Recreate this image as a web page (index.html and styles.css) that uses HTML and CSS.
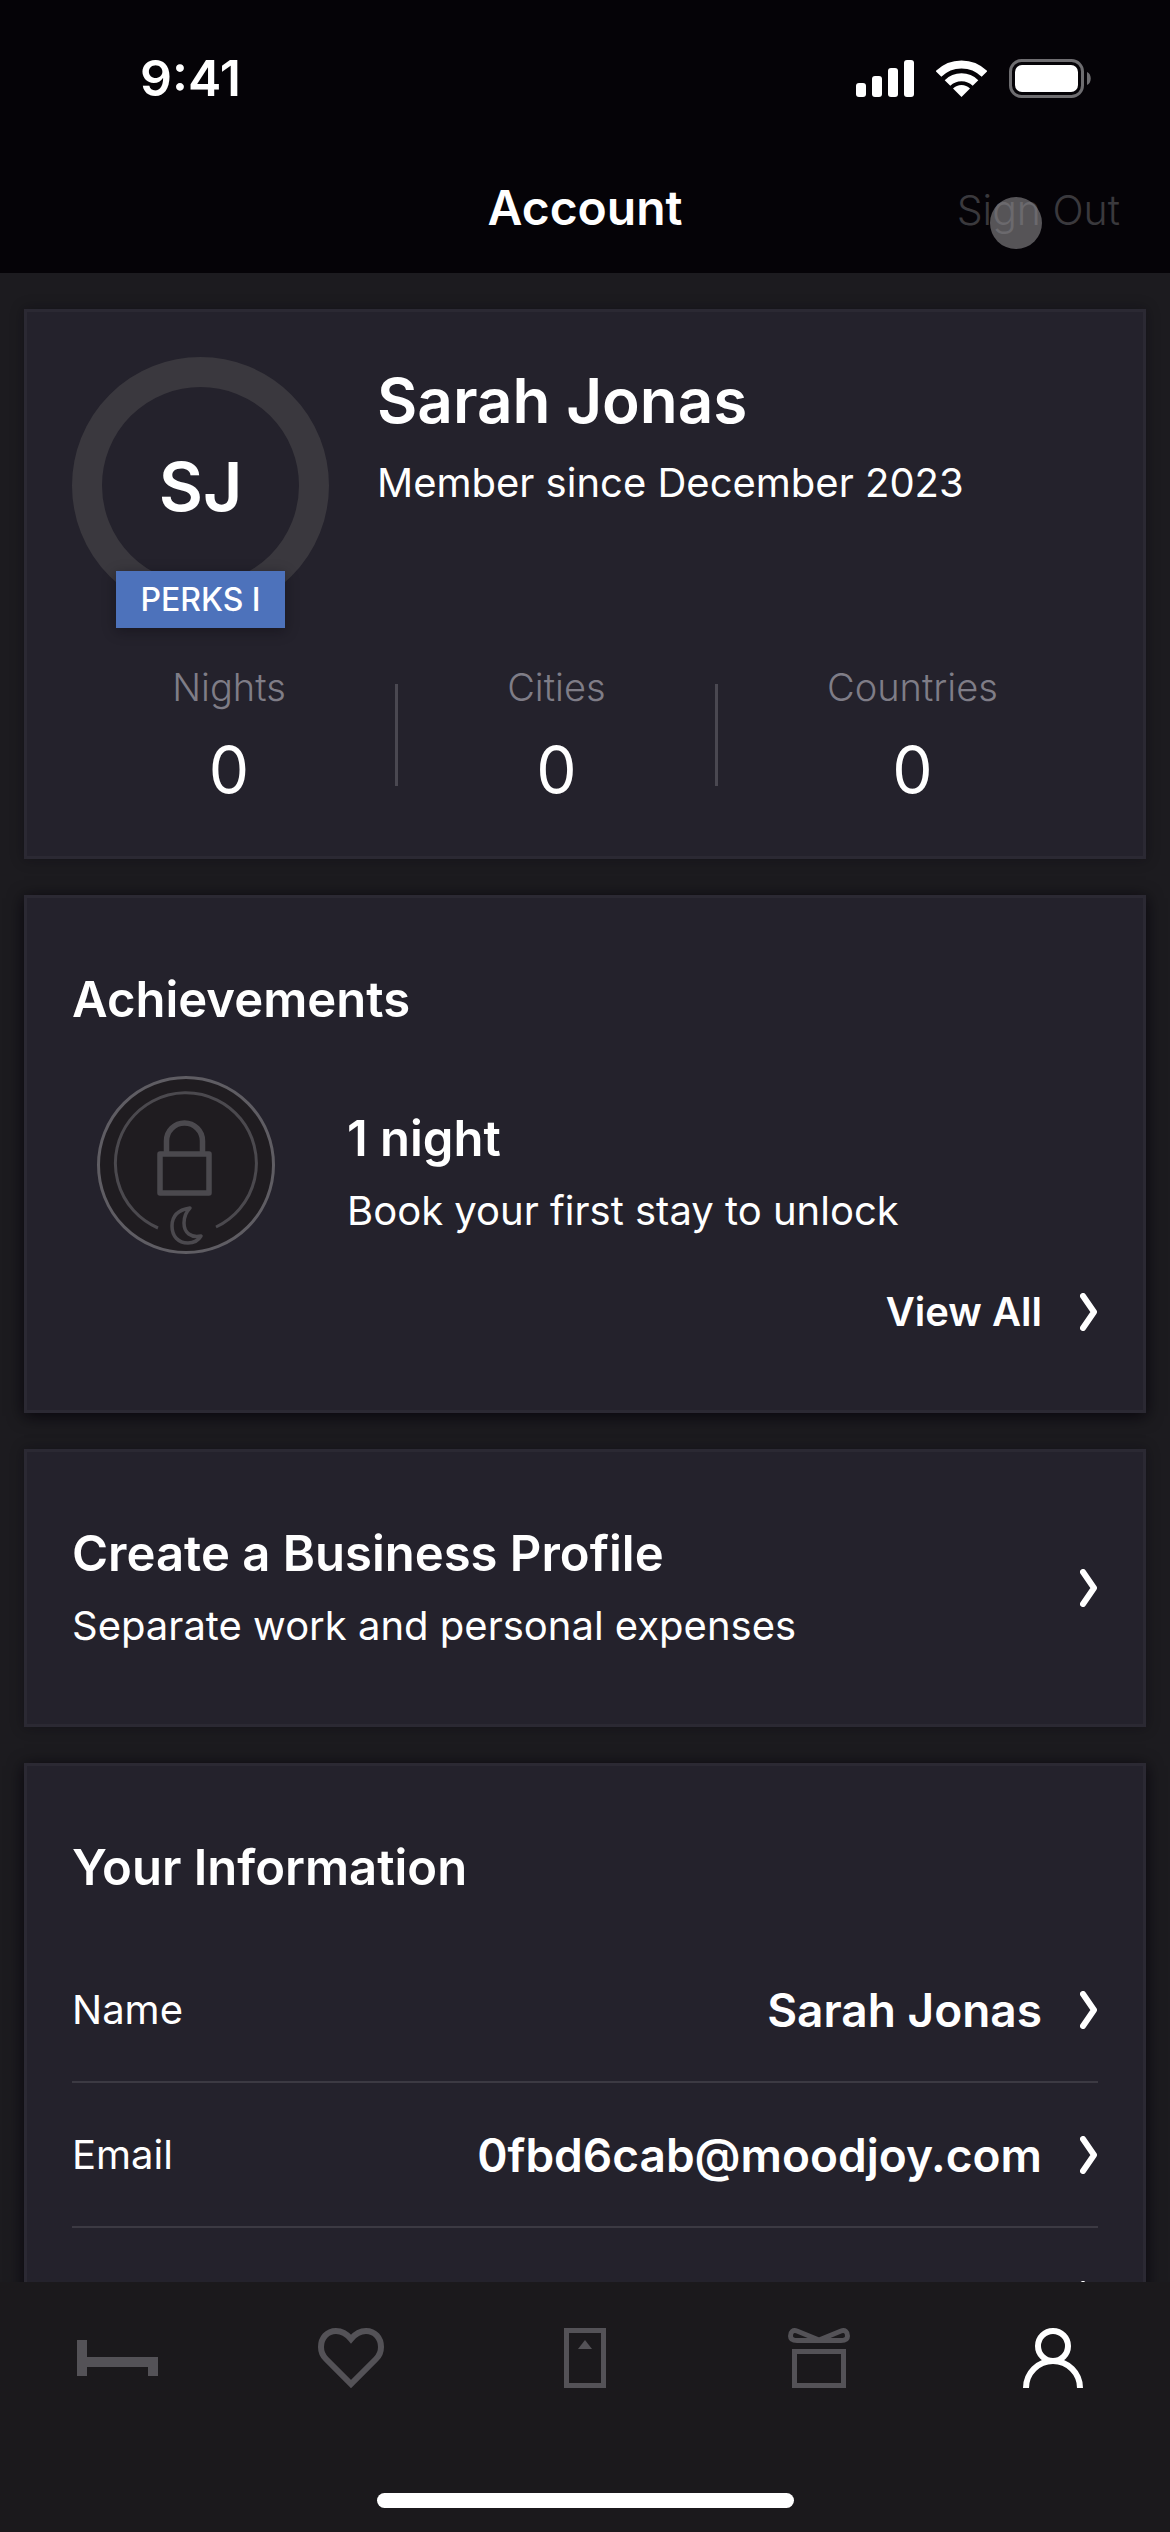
FILE: index.html
```html
<!DOCTYPE html>
<html lang="en">
<head>
  <meta charset="UTF-8" />
  <meta name="viewport" content="width=device-width, initial-scale=1.0" />
  <title>Account</title>
  <link rel="stylesheet" href="styles.css">
</head>
<body>
  <header class="top">
    <div class="status">
      <span class="time">9:41</span>
      <div class="status-icons">
        <svg width="58" height="37" viewBox="0 0 58 37" fill="#fff">
          <rect x="0" y="23" width="10" height="14" rx="3" />
          <rect x="16" y="16" width="10" height="21" rx="3" />
          <rect x="32" y="8" width="10" height="29" rx="3" />
          <rect x="48" y="0" width="10" height="37" rx="3" />
        </svg>
        <svg width="51" height="37" viewBox="0 0 51 37">
          <g fill="none" stroke="#fff" stroke-width="8">
            <path d="M2.5 14A32.5 32.5 0 0 1 48.5 14" />
            <path d="M11.5 23A20 20 0 0 1 39.5 23" />
          </g>
          <path fill="#fff" d="M25.5 37L17 28.5A12 12 0 0 1 34 28.5Z" />
        </svg>
        <svg width="83" height="39" viewBox="0 0 83 39">
          <rect x="1.5" y="1.5" width="72" height="36" rx="11" fill="none" stroke="#6e6d70" stroke-width="3" />
          <rect x="6" y="6" width="63" height="27" rx="7" fill="#fff" />
          <path d="M78 13C83 15 83 24 78 26Z" fill="#6e6d70" />
        </svg>
      </div>
    </div>
    <div class="nav">
      <h1>Account</h1>
      <button class="sign-out">Sign Out<span class="touch"></span></button>
    </div>
  </header>

  <main class="content">
    <section class="card profile">
      <div class="profile-head">
        <div class="avatar">SJ<span class="perks">PERKS I</span></div>
        <div class="profile-text">
          <h2 class="profile-name">Sarah Jonas</h2>
          <p class="text">Member since December 2023</p>
        </div>
      </div>
      <dl class="stats">
        <div class="stat"><dt>Nights</dt><dd>0</dd></div>
        <div class="stat"><dt>Cities</dt><dd>0</dd></div>
        <div class="stat"><dt>Countries</dt><dd>0</dd></div>
      </dl>
    </section>

    <section class="card raised">
      <h2 class="title">Achievements</h2>
      <div class="achievement">
        <svg width="178" height="178" viewBox="0 0 178 178" fill="none">
          <circle cx="89" cy="89" r="87.5" fill="#1f1c20" stroke="#5f5d63" stroke-width="3" />
          <path d="M61 152A70.5 70.5 0 1 1 119 151" stroke="#4b494e" stroke-width="3" />
          <g stroke="#4b494e" stroke-width="5.5" stroke-linejoin="round">
            <path d="M69.5 78V65A18 18 0 0 1 105.5 65V78" />
            <rect x="63" y="78" width="49" height="39" />
          </g>
          <path d="M93 132C80 134 75 141 75 150C75 160 81 167 91 167C97 167 101 165 104 160C94 162 87 157 87 147C87 140 89 136 93 132Z" stroke="#4b494e" stroke-width="3.5" stroke-linejoin="round" />
        </svg>
        <div class="stack">
          <h3 class="title">1 night</h3>
          <p class="text">Book your first stay to unlock</p>
        </div>
      </div>
      <a href="#" class="view-all">View All
        <svg class="chevron" viewBox="0 0 18 38"><path d="M3 3L14 19L3 35" /></svg>
      </a>
    </section>

    <a href="#" class="card business">
      <div class="stack">
        <h2 class="title">Create a Business Profile</h2>
        <p class="text">Separate work and personal expenses</p>
      </div>
      <svg class="chevron" viewBox="0 0 18 38"><path d="M3 3L14 19L3 35" /></svg>
    </a>

    <section class="card raised">
      <h2 class="title">Your Information</h2>
      <div class="rows">
        <button class="row">
          <span class="text">Name</span>
          <span class="value">Sarah Jonas</span>
          <svg class="chevron" viewBox="0 0 18 38"><path d="M3 3L14 19L3 35" /></svg>
        </button>
        <button class="row">
          <span class="text">Email</span>
          <span class="value">0fbd6cab@moodjoy.com</span>
          <svg class="chevron" viewBox="0 0 18 38"><path d="M3 3L14 19L3 35" /></svg>
        </button>
        <button class="row" aria-label="Phone">
          <span class="value"></span>
          <svg class="chevron" viewBox="0 0 18 38"><path d="M3 3L14 19L3 35" /></svg>
        </button>
      </div>
    </section>
  </main>

  <footer class="bottom">
    <nav class="tabs">
      <a href="#" class="tab" aria-label="Hotels">
        <svg width="81" height="60" viewBox="0 0 81 60" fill="currentColor">
          <path d="M0 12H10V29H81V48H71V39H10V48H0Z" />
        </svg>
      </a>
      <a href="#" class="tab" aria-label="Favorites">
        <svg width="66" height="60" viewBox="0 0 66 60" fill="none" stroke="currentColor" stroke-width="6">
          <path d="M33 11C28 5 24 3 18 3C9 3 3 10 3 19C3 24 5 28 8 31L33 56L58 31C61 28 63 24 63 19C63 10 57 3 48 3C42 3 38 5 33 11Z" />
        </svg>
      </a>
      <a href="#" class="tab" aria-label="Bookings">
        <svg width="42" height="60" viewBox="0 0 42 60">
          <rect x="2.5" y="2.5" width="37" height="55" fill="none" stroke="currentColor" stroke-width="5" />
          <path d="M14 21L21 12L28 21Z" fill="currentColor" />
        </svg>
      </a>
      <a href="#" class="tab" aria-label="Rewards">
        <svg width="62" height="60" viewBox="0 0 62 60" fill="none" stroke="currentColor" stroke-width="5">
          <path d="M31 12L9 3C5 1.5 2.5 4 2.5 8C2.5 11 5 12.5 9 12.5H53C57 12.5 59.5 11 59.5 8C59.5 4 57 1.5 53 3Z" />
          <rect x="6.5" y="23.5" width="49" height="34" />
        </svg>
      </a>
      <a href="#" class="tab active" aria-label="Account">
        <svg width="60" height="60" viewBox="0 0 60 60" fill="none" stroke="currentColor" stroke-width="6">
          <circle cx="30" cy="18" r="15" />
          <path d="M3 60A27 27 0 0 1 57 60" />
        </svg>
      </a>
    </nav>
    <div class="home-bar"></div>
  </footer>
</body>
</html>
```
FILE: styles.css
```css
* {
  box-sizing: border-box;
}
body {
  margin: 0;
  height: 100vh;
  display: flex;
  flex-direction: column;
  overflow: hidden;
  background-color: #1c1b1f;
  color: #fff;
  font-family: Inter, "Liberation Sans", sans-serif;
}
h1, h2, h3, p, dl, dd {
  margin: 0;
}
a {
  color: inherit;
  text-decoration: none;
}
button {
  padding: 0;
  border: none;
  background: none;
  color: inherit;
  font-family: inherit;
  cursor: pointer;
}
svg {
  display: block;
  flex: none;
}

/* Header */
.top {
  background-color: #050307;
}
.status {
  display: flex;
  justify-content: space-between;
  align-items: center;
  height: 156px;
  padding: 0 78px 0 140px;
}
.time {
  font-size: 50px;
  font-weight: 600;
}
.status-icons {
  display: flex;
  align-items: center;
  gap: 22px;
}
.nav {
  display: grid;
  grid-template-columns: 1fr auto 1fr;
  align-items: baseline;
  height: 117px;
  padding: 22px 50px 0;
}
.nav h1 {
  grid-column: 2;
  font-size: 48px;
  font-weight: 600;
  line-height: 60px;
}
.sign-out {
  position: relative;
  justify-self: end;
  font-size: 41px;
  font-weight: 300;
  color: #3a393d;
}
.touch {
  position: absolute;
  right: 78px;
  top: 12px;
  width: 52px;
  height: 52px;
  border-radius: 50%;
  background-color: rgba(140, 138, 142, 0.6);
}

/* Cards */
.content {
  flex: 1;
  min-height: 0;
  overflow: hidden;
  padding: 36px 24px 0;
  display: flex;
  flex-direction: column;
  gap: 36px;
}
.card {
  flex: none;
  padding: 72px 45px;
  border: 3px solid #2b2933;
  background-color: #24222c;
  box-shadow: 0 0 12px rgba(10, 8, 16, 0.4);
}
.raised {
  box-shadow: 0 3px 15px rgba(5, 3, 10, 0.9);
}
.title {
  font-size: 49px;
  font-weight: 600;
  line-height: 60px;
}
.text {
  font-size: 40px;
  font-weight: 400;
  line-height: 52px;
}
.stack {
  display: flex;
  flex-direction: column;
  gap: 16px;
}
.chevron {
  width: 18px;
  height: 38px;
  fill: none;
  stroke: #fff;
  stroke-width: 6;
  stroke-linecap: round;
  stroke-linejoin: round;
}

/* Profile */
.profile {
  padding: 45px 36px 52px;
}
.profile-head {
  display: flex;
  gap: 48px;
  padding: 0 9px;
}
.avatar {
  position: relative;
  display: flex;
  flex: none;
  align-items: center;
  justify-content: center;
  width: 257px;
  height: 257px;
  border: 30px solid #3a383e;
  border-radius: 50%;
  font-size: 68px;
  font-weight: 600;
}
.perks {
  position: absolute;
  left: 14px;
  top: 184px;
  width: 169px;
  background-color: #4d72bb;
  font-size: 32px;
  font-weight: 500;
  line-height: 57px;
  text-align: center;
  box-shadow: 0 3px 12px rgba(10, 8, 16, 0.4);
}
.profile-text {
  display: flex;
  flex-direction: column;
  gap: 20px;
  padding-top: 8px;
}
.profile-name {
  font-size: 62px;
  font-weight: 600;
  line-height: 72px;
}
.stats {
  display: flex;
  align-items: center;
  margin-top: 52px;
}
.stat {
  flex: 1 1 auto;
  display: flex;
  flex-direction: column;
  align-items: center;
  justify-content: center;
  height: 102px;
  gap: 24px;
  margin: 18px 0;
}
.stat + .stat {
  border-left: 3px solid #4a4851;
}
.stat dt {
  font-size: 38px;
  font-weight: 300;
  line-height: 46px;
  color: #7f7d87;
}
.stat dd {
  font-size: 64px;
  line-height: 72px;
}

/* Achievements */
.achievement {
  display: flex;
  align-items: center;
  gap: 72px;
  margin: 46px 0 32px;
  padding-left: 25px;
}
.achievement .stack {
  padding-top: 16px;
}
.view-all {
  display: flex;
  align-items: center;
  justify-content: flex-end;
  gap: 38px;
  font-size: 40px;
  font-weight: 600;
  line-height: 52px;
}

/* Business profile */
.business {
  display: flex;
  align-items: center;
  justify-content: space-between;
}

/* Your information */
.rows {
  margin-top: 40px;
}
.row {
  display: flex;
  align-items: center;
  width: 100%;
  height: 145px;
  border-bottom: 2px solid #3c3a43;
}
.value {
  flex: 1;
  margin-right: 38px;
  font-size: 46px;
  font-weight: 600;
  text-align: right;
}

/* Bottom bar */
.bottom {
  display: flex;
  flex-direction: column;
  gap: 105px;
  padding: 46px 0 24px;
  background-color: #1b191c;
}
.tabs {
  display: flex;
}
.tab {
  flex: 1;
  display: flex;
  justify-content: center;
  color: #545257;
}
.tab.active {
  color: #fff;
}
.home-bar {
  align-self: center;
  width: 417px;
  height: 15px;
  border-radius: 8px;
  background-color: #fff;
}
```
